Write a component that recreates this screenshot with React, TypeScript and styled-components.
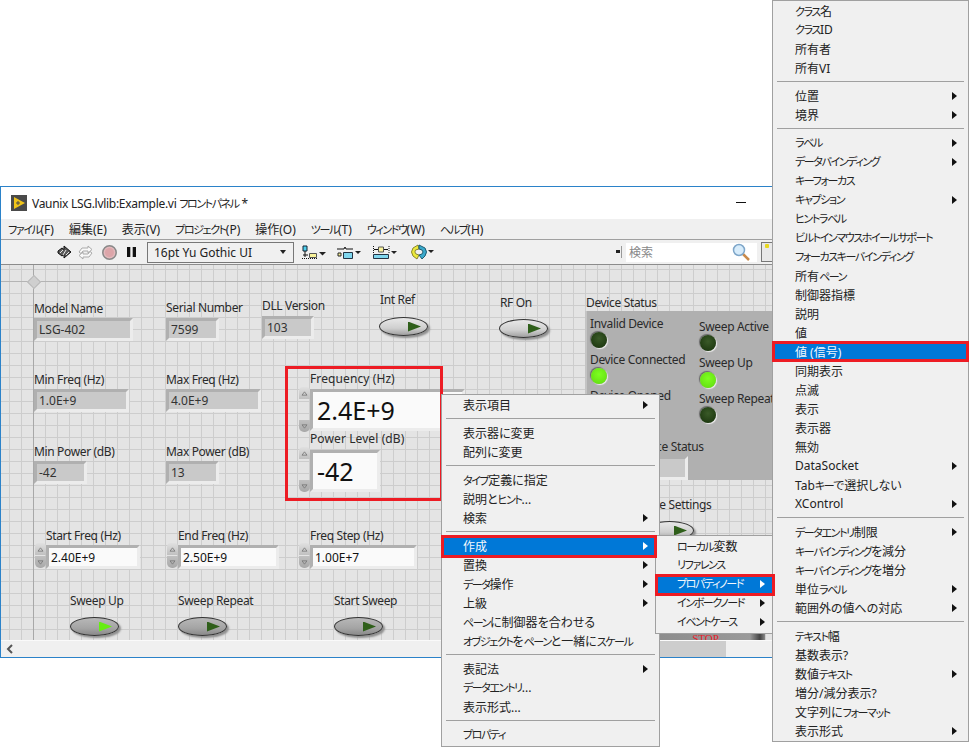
import React from "react";
import styled, { createGlobalStyle, css } from "styled-components";

const GlobalStyle = createGlobalStyle`
  html, body {
    margin: 0;
    background: #fff;
    overflow: hidden;
  }
  body {
    font-family: "Noto Sans", "Noto Sans CJK JP", sans-serif;
    font-size: 12px;
    color: #222;
    font-feature-settings: "palt";
  }
`;

type Pos = { $x: number; $y: number };

// coordinates are those of the screenshot, canvas starts at (1, 265)
const place = css<Pos>`
  position: absolute;
  left: ${(p) => p.$x - 1}px;
  top: ${(p) => p.$y - 265}px;
`;

type Entry = { t?: string; sub?: boolean; on?: boolean };

const sep: Entry = {};
const row = (t: string, sub = false, on = false): Entry => ({ t, sub, on });

const mainMenu: Entry[] = [
  row("表示項目", true),
  sep,
  row("表示器に変更"),
  row("配列に変更"),
  sep,
  row("タイプ定義に指定"),
  row("説明とヒント..."),
  row("検索", true),
  sep,
  row("作成", true, true),
  row("置換", true),
  row("データ操作", true),
  row("上級", true),
  row("ペーンに制御器を合わせる"),
  row("オブジェクトをペーンと一緒にスケール"),
  sep,
  row("表記法", true),
  row("データエントリ..."),
  row("表示形式..."),
  sep,
  row("プロパティ"),
];

const createMenu: Entry[] = [
  row("ローカル変数"),
  row("リファレンス"),
  row("プロパティノード", true, true),
  row("インボークノード", true),
  row("イベントケース", true),
];

const propertyMenu: Entry[] = [
  row("クラス名"),
  row("クラスID"),
  row("所有者"),
  row("所有VI"),
  sep,
  row("位置", true),
  row("境界", true),
  sep,
  row("ラベル", true),
  row("データバインディング", true),
  row("キーフォーカス"),
  row("キャプション", true),
  row("ヒントラベル"),
  row("ビルトインマウスホイールサポート"),
  row("フォーカスキーバインディング"),
  row("所有ペーン"),
  row("制御器指標"),
  row("説明"),
  row("値"),
  row("値 (信号)", false, true),
  row("同期表示"),
  row("点滅"),
  row("表示"),
  row("表示器"),
  row("無効"),
  row("DataSocket", true),
  row("Tabキーで選択しない"),
  row("XControl", true),
  sep,
  row("データエントリ制限", true),
  row("キーバインディングを減分"),
  row("キーバインディングを増分"),
  row("単位ラベル", true),
  row("範囲外の値への対応", true),
  sep,
  row("テキスト幅"),
  row("基数表示?"),
  row("数値テキスト", true),
  row("増分/減分表示?"),
  row("文字列にフォーマット"),
  row("表示形式", true),
];

const menuBarItems = [
  "ファイル(F)",
  "編集(E)",
  "表示(V)",
  "プロジェクト(P)",
  "操作(O)",
  "ツール(T)",
  "ウィンドウ(W)",
  "ヘルプ(H)",
];

const labels: [string, number, number, boolean?][] = [
  ["Model Name", 34, 301],
  ["Serial Number", 166, 300],
  ["DLL Version", 262, 298],
  ["Int Ref", 380, 292],
  ["RF On", 500, 295],
  ["Device Status", 586, 295],
  ["Min Freq (Hz)", 34, 372],
  ["Max Freq (Hz)", 166, 372],
  ["Frequency (Hz)", 310, 371, true],
  ["Power Level (dB)", 310, 431, true],
  ["Min Power (dB)", 34, 444],
  ["Max Power (dB)", 166, 444],
  ["Start Freq (Hz)", 46, 528],
  ["End Freq (Hz)", 178, 528],
  ["Freq Step (Hz)", 310, 528],
  ["Sweep Up", 70, 593],
  ["Sweep Repeat", 178, 593],
  ["Start Sweep", 334, 593],
  ["Save Settings", 641, 497],
];

const clusterLabels: [string, number, number][] = [
  ["Invalid Device", 590, 316],
  ["Device Connected", 590, 352],
  ["Device Opened", 590, 388],
  ["Sweep Active", 699, 319],
  ["Sweep Up", 699, 355],
  ["Sweep Repeat", 699, 391],
  ["Device Status", 633, 439],
];

const readouts: [string, number, number, number][] = [
  ["LSG-402", 34, 318, 99],
  ["7599", 166, 318, 53],
  ["103", 262, 316, 52],
  ["1.0E+9", 34, 389, 95],
  ["4.0E+9", 166, 389, 95],
  ["-42", 34, 461, 53],
  ["13", 166, 461, 53],
];

const smallFields: [string, number, number][] = [
  ["2.40E+9", 46, 94],
  ["2.50E+9", 178, 101],
  ["1.00E+7", 310, 107],
];

const buttons: [number, number, boolean, boolean][] = [
  [379, 317, false, true],
  [499, 319, false, true],
  [645, 521, false, true],
  [70, 617, true, false],
  [178, 617, false, false],
  [334, 617, false, false],
];

const leds: [number, number, boolean][] = [
  [591, 332, false],
  [591, 368, true],
  [700, 335, false],
  [700, 372, true],
  [700, 407, false],
];

// Yu Gothic UI has much narrower katakana than Noto, so runs of them get squeezed
const Jp = ({ t }: { t: string }) => (
  <span>
    {t.split(/([\u30A0-\u30FF]+)/).map((part, i) =>
      i % 2 ? <Kana key={i}>{part}</Kana> : part
    )}
  </span>
);

const Menu = ({ items, textLeft, arrowRight }: { items: Entry[]; textLeft: number; arrowRight: number }) => (
  <>
    {items.map((it, i) =>
      it.t ? (
        <MenuRow key={i} $on={it.on} $left={textLeft} $right={arrowRight}>
          <Jp t={it.t} />
          {it.sub && <MenuArrow $on={it.on} />}
        </MenuRow>
      ) : (
        <MenuSep key={i} />
      )
    )}
  </>
);

const Spinner = ({ x, y, h }: { x: number; y: number; h: number }) => (
  <SpinBox $x={x} $y={y} $h={h}>
    <SpinBtn $up>
      <SpinGlyph viewBox="0 0 8 6">
        <path d="M4 1 7 5H1Z" fill="none" stroke="#777" />
      </SpinGlyph>
    </SpinBtn>
    <SpinBtn>
      <SpinGlyph viewBox="0 0 8 6">
        <path d="M4 5 7 1H1Z" fill="none" stroke="#777" />
      </SpinGlyph>
    </SpinBtn>
  </SpinBox>
);

const App = () => (
  <Page>
    <GlobalStyle />
    <Window>
      <TitleBar>
        <svg width="16" height="16" viewBox="0 0 16 16">
          <rect width="16" height="16" fill="#4a4a4a" />
          <path d="M3 2 14 8 3 14Z" fill="#f0c419" />
          <path d="M5 8h4M7 6v4" stroke="#4a4a4a" strokeWidth="1" />
        </svg>
        <TitleText>
          <Jp t="Vaunix LSG.lvlib:Example.vi フロントパネル *" />
        </TitleText>
        <MinimizeMark />
      </TitleBar>
      <MenuBar>
        {menuBarItems.map((m) => (
          <Jp key={m} t={m} />
        ))}
      </MenuBar>
      <Toolbar>
        <ToolIcon width="16" height="14" viewBox="0 0 16 14">
          <path d="M1 6 5 3l2 1.500V1l7 6-7 6V9.500L5 11 1 8Z" fill="#5a5a5a" stroke="#111" />
          <path d="M3 8l3-3M6 10l3-5M9 10l3-3" stroke="#e4e4e4" />
        </ToolIcon>
        <ToolIcon width="17" height="15" viewBox="0 0 17 15" $ml={4}>
          <path d="M2 7 5 3h6V1l4 3.500L11 8V6H6L4 8.500Z" fill="#f8f8f8" stroke="#aaa" />
          <path d="M15 8l-3 4H6v2L2 10.500 6 7v2h5l2-2.500Z" fill="#f8f8f8" stroke="#aaa" />
        </ToolIcon>
        <ToolIcon width="15" height="15" viewBox="0 0 15 15" $ml={8}>
          <circle cx="7.500" cy="7.500" r="6.700" fill="#e2b9bc" stroke="#888" strokeWidth="1.500" />
          <circle cx="7.500" cy="7.500" r="4.500" fill="#dca5a9" />
        </ToolIcon>
        <ToolIcon width="9" height="10" viewBox="0 0 9 10" $ml={10}>
          <path d="M0 0h3.300v10H0ZM5.700 0H9v10H5.700Z" fill="#111" />
        </ToolIcon>
        <FontSelect>
          <span>16pt Yu Gothic UI</span>
          <Caret />
        </FontSelect>
        <ToolIcon width="24" height="15" viewBox="0 0 24 15" $ml={8}>
          <path d="M1 1h4v5H1Z" fill="#4fd0ee" stroke="#123" />
          <path d="M3 6v6M1 10h5" stroke="#111" />
          <path d="M0 13.500h16" stroke="#111" strokeDasharray="1 1" />
          <path d="M7.500 8.500h7v4h-7Z" fill="#f8f29a" stroke="#555" />
          <path d="M17 7h7l-3.500 3.500Z" fill="#222" />
        </ToolIcon>
        <ToolIcon width="24" height="15" viewBox="0 0 24 15" $ml={11}>
          <path d="M0 4h7l1-2 1 2h7" fill="none" stroke="#111" />
          <path d="M1 8h3v3H1Z" fill="#f8f29a" stroke="#222" />
          <path d="M6.500 7.500h9v6h-9Z" fill="#7fd6ee" stroke="#234" />
          <path d="M18 6h6l-3 3Z" fill="#222" />
        </ToolIcon>
        <ToolIcon width="24" height="15" viewBox="0 0 24 15" $ml={12}>
          <path d="M0.500 1v7M16 1v7" stroke="#111" strokeDasharray="1 1" />
          <path d="M5.500 2h5v5h-5Z" fill="#f8f29a" stroke="#555" />
          <path d="M1 4.500h4M11 4.500h4" stroke="#111" />
          <path d="M0.500 9.500h15v4H0.500Z" fill="#7fd6ee" stroke="#234" />
          <path d="M18 6h6l-3 3Z" fill="#222" />
        </ToolIcon>
        <ToolIcon width="24" height="16" viewBox="0 0 24 16" $ml={13}>
          <path d="M8 1 3 4Q0 8 3 12l4 3 2-4-3-1Q4 8 5.500 6L9 5Z" fill="#ecea3c" stroke="#8a8630" />
          <path d="M9 1v4l3 1q2 2 0 4l-3 1 3 4 3-3q3-4 0-8Z" fill="#3aa9cc" stroke="#1f5c70" />
          <path d="M18 6h6l-3 3Z" fill="#222" />
        </ToolIcon>
        <ToolSpacer />
        <PaneTab />
        <SearchBox>
          <span>検索</span>
          <svg width="18" height="18" viewBox="0 0 18 18">
            <path d="M11 11l6 6" stroke="#c98a4b" strokeWidth="2.500" />
            <circle cx="7" cy="7" r="5.500" fill="#d7ecfb" stroke="#7ea6c9" strokeWidth="1.500" />
          </svg>
        </SearchBox>
        <HelpBox />
      </Toolbar>
      <Canvas>
        <OriginMark />
        <ClusterPanel $x={585} $y={311} />
        {labels.map(([t, x, y, wide]) => (
          <FieldLabel key={t + x} $x={x} $y={y} $wide={wide}>
            {t}
          </FieldLabel>
        ))}
        {clusterLabels.map(([t, x, y]) => (
          <FieldLabel key={t + x} $x={x} $y={y}>
            {t}
          </FieldLabel>
        ))}
        {readouts.map(([t, x, y, w]) => (
          <NumBox key={t + x} $x={x} $y={y} $w={w} $h={23}>
            {t}
          </NumBox>
        ))}
        <NumBox $x={630} $y={456} $w={58} $h={24} />
        {smallFields.map(([t, x, w]) => (
          <React.Fragment key={t}>
            <Spinner x={x - 11} y={543} h={25} />
            <NumBox $x={x} $y={545} $w={w} $h={24} $field>
              {t}
            </NumBox>
          </React.Fragment>
        ))}
        <Spinner x={299} y={387} h={45} />
        <NumBox $x={310} $y={389} $w={155} $h={42} $field $big>
          2.4E+9
        </NumBox>
        <Spinner x={299} y={447} h={45} />
        <NumBox $x={310} $y={450} $w={70} $h={42} $field $big>
          -42
        </NumBox>
        {buttons.map(([x, y, lit, pale]) => (
          <PushButton key={x + "-" + y} $x={x} $y={y} $pale={pale}>
            <ButtonLamp $lit={lit} />
          </PushButton>
        ))}
        {leds.map(([x, y, lit]) => (
          <Led key={x + "-" + y} $x={x} $y={y} $lit={lit} />
        ))}
        <StopButton $x={640} $y={620}>
          STOP
        </StopButton>
        <RedFrame $x={285} $y={366} />
      </Canvas>
      <ScrollBar>
        <ScrollArrow viewBox="0 0 8 10">
          <path d="M6 1 2 5l4 4" fill="none" stroke="#555" strokeWidth="2" />
        </ScrollArrow>
        <ScrollThumb />
      </ScrollBar>
    </Window>
    <PropertyMenu>
      <Menu items={propertyMenu} textLeft={22} arrowRight={11} />
    </PropertyMenu>
    <MainMenu>
      <Menu items={mainMenu} textLeft={21} arrowRight={11} />
    </MainMenu>
    <CreateMenu>
      <Menu items={createMenu} textLeft={21} arrowRight={7} />
    </CreateMenu>
    <MarkFrame $left={441} $top={535} $w={216} $h={23} />
    <MarkFrame $left={655} $top={574} $w={120} $h={22} />
    <MarkFrame $left={772} $top={341} $w={197} $h={21} />
  </Page>
);

export default App;

const Page = styled.div`
  position: relative;
  width: 969px;
  height: 747px;
  padding-top: 186px;
  box-sizing: border-box;
  overflow: hidden;
`;

const Kana = styled.span`
  font-size: 11px;
  letter-spacing: -1.4px;
`;

const Window = styled.div`
  display: flex;
  flex-direction: column;
  width: 800px;
  height: 472px;
  box-sizing: border-box;
  border: 1px solid #2b82c9;
  background: #fff;
`;

const TitleBar = styled.div`
  display: flex;
  align-items: center;
  height: 32px;
  padding-left: 10px;
  flex-shrink: 0;
`;

const TitleText = styled.span`
  margin-left: 5px;
  color: #222;
  letter-spacing: -0.3px;
  white-space: pre;
`;

const MinimizeMark = styled.span`
  position: absolute;
  left: 736px;
  top: 202px;
  width: 10px;
  height: 1px;
  background: #111;
`;

const MenuBar = styled.div`
  display: flex;
  align-items: center;
  gap: 15px;
  height: 20px;
  padding-left: 7px;
  background: #f0f0f0;
  border-bottom: 1px solid #a0a0a0;
  flex-shrink: 0;
`;

const Toolbar = styled.div`
  display: flex;
  align-items: center;
  height: 24px;
  padding-left: 56px;
  background: #f0f0f0;
  border-bottom: 1px solid #8c8c8c;
  flex-shrink: 0;
`;

const ToolIcon = styled.svg<{ $ml?: number }>`
  margin-left: ${(p) => p.$ml ?? 0}px;
  flex-shrink: 0;
`;

const FontSelect = styled.div`
  display: flex;
  align-items: center;
  justify-content: space-between;
  width: 147px;
  height: 21px;
  margin-left: 11px;
  padding: 0 7px 0 6px;
  box-sizing: border-box;
  border: 1px solid #777;
  font-size: 12px;
`;

const Caret = styled.span`
  width: 0;
  height: 0;
  border-left: 3.5px solid transparent;
  border-right: 3.5px solid transparent;
  border-top: 4px solid #222;
`;

const ToolSpacer = styled.div`
  flex: 1;
`;

const PaneTab = styled.div`
  width: 6px;
  height: 12px;
  margin-right: 4px;
  border-right: 1px solid #999;
  box-sizing: border-box;
  background: linear-gradient(#222, #222) 0 4px / 4px 3px no-repeat;
`;

const SearchBox = styled.div`
  display: flex;
  align-items: center;
  justify-content: space-between;
  width: 131px;
  height: 19px;
  padding: 0 7px 0 3px;
  box-sizing: border-box;
  background: #fff;
  color: #888;
`;

const HelpBox = styled.div`
  width: 30px;
  height: 18px;
  margin: 0 6px 0 4px;
  border: 1px solid #777;
  background: radial-gradient(circle at 5px 3px, #e8d820 2px, transparent 2.5px), #e8e8e8;
`;

const Canvas = styled.div`
  position: relative;
  flex: 1;
  overflow: hidden;
  background-color: #e4e4e4;
  background-image: linear-gradient(to right, #cdcdcd 1px, transparent 1px),
    linear-gradient(to bottom, #cdcdcd 1px, transparent 1px);
  background-size: 12px 12px;
  background-position: 8px 4px;

  &::before {
    content: "";
    position: absolute;
    left: 32px;
    top: 0;
    bottom: 0;
    width: 1px;
    background: #a8a8a8;
  }
  &::after {
    content: "";
    position: absolute;
    left: 0;
    right: 0;
    top: 16px;
    height: 1px;
    background: #b4b4b4;
  }
`;

const OriginMark = styled.div`
  position: absolute;
  left: 28px;
  top: 12px;
  width: 8px;
  height: 8px;
  transform: rotate(45deg);
  background: #cfcfcf;
  border: 1px solid #b8b8b8;
  z-index: 1;
`;

const ClusterPanel = styled.div<Pos>`
  ${place}
  width: 220px;
  height: 169px;
  background: #b0b0b0;
  border-left: 2px solid #c4c4c4;
  box-sizing: border-box;
`;

const FieldLabel = styled.div<Pos & { $wide?: boolean }>`
  ${place}
  line-height: 16px;
  white-space: nowrap;
  color: #2a2a2a;
  letter-spacing: ${(p) => (p.$wide ? 0.1 : -0.35)}px;
`;

const NumBox = styled.div<Pos & { $w: number; $h: number; $field?: boolean; $big?: boolean }>`
  ${place}
  display: flex;
  align-items: center;
  width: ${(p) => p.$w}px;
  height: ${(p) => p.$h}px;
  box-sizing: border-box;
  padding-left: ${(p) => (p.$big ? 4 : 2)}px;
  border: 3px solid;
  border-color: #b0b0b0 #ececec #ececec #b0b0b0;
  background: ${(p) => (p.$field ? "#fafafa" : "#c9c9c9")};
  font-size: ${(p) => (p.$big ? 25 : 12)}px;
  color: ${(p) => (p.$field ? "#111" : "#333")};
  white-space: nowrap;
`;

const SpinBox = styled.div<Pos & { $h: number }>`
  ${place}
  display: flex;
  flex-direction: column;
  justify-content: space-between;
  width: 11px;
  height: ${(p) => p.$h}px;
`;

const SpinBtn = styled.div<{ $up?: boolean }>`
  display: flex;
  align-items: center;
  justify-content: center;
  height: 12px;
  background: linear-gradient(${(p) => (p.$up ? "#e0e0e0, #c0c0c0" : "#c0c0c0, #a8a8a8")});
  border-radius: ${(p) => (p.$up ? "4px 4px 0 0" : "0 0 5px 5px")};
`;

const SpinGlyph = styled.svg`
  width: 7px;
  height: 5px;
`;

const PushButton = styled.div<Pos & { $pale?: boolean }>`
  ${place}
  display: flex;
  align-items: center;
  justify-content: flex-end;
  width: 49px;
  height: 19px;
  padding-right: 6px;
  box-sizing: border-box;
  border: 1px solid #333;
  border-radius: 50%;
  background: ${(p) =>
    p.$pale
      ? "linear-gradient(#e8e8e8, #cfcfcf 60%, #a0a0a0)"
      : "linear-gradient(#b8b8b8, #a4a4a4 60%, #8a8a8a)"};
  box-shadow: 2px 2px 2px #8f8f8f;
`;

const ButtonLamp = styled.div<{ $lit?: boolean }>`
  width: 13px;
  height: 10px;
  clip-path: polygon(0 0, 100% 50%, 0 100%);
  background: ${(p) => (p.$lit ? "#66ee11" : "#2f5f1a")};
`;

const Led = styled.div<Pos & { $lit?: boolean }>`
  ${place}
  width: 16px;
  height: 16px;
  border-radius: 50%;
  background: ${(p) =>
    p.$lit
      ? "radial-gradient(circle at 50% 40%, #7dff20, #5fd80f)"
      : "radial-gradient(circle at 50% 40%, #3a5a28, #16300a)"};
  box-shadow: 1px 1px 1px #eee, -1px -1px 1px #666;
`;

const StopButton = styled.div<Pos>`
  ${place}
  width: 125px;
  height: 40px;
  padding-top: 12px;
  box-sizing: border-box;
  text-align: center;
  padding-left: 6px;
  background: linear-gradient(to right, #8a8a8a 0, #9a9a9a 88%, #444 96%, #888);
  color: #e8202a;
  font-family: "Liberation Serif", serif;
  font-size: 11px;
`;

const RedFrame = styled.div<Pos>`
  ${place}
  width: 158px;
  height: 135px;
  box-sizing: border-box;
  border: 3px solid #ed1c24;
  z-index: 2;
`;

const ScrollBar = styled.div`
  display: flex;
  align-items: center;
  height: 16px;
  background: #f0f0f0;
  border-top: 1px solid #fafafa;
  flex-shrink: 0;
`;

const ScrollArrow = styled.svg`
  width: 8px;
  height: 10px;
  margin-left: 5px;
`;

const ScrollThumb = styled.div`
  width: 280px;
  height: 100%;
  margin-left: 432px;
  background: #cdcdcd;
`;

const menuPanel = css`
  position: absolute;
  box-sizing: border-box;
  background: #f0f0f0;
  border: 1px solid #a0a0a0;
`;

const PropertyMenu = styled.div`
  ${menuPanel}
  left: 772px;
  top: 0;
  width: 197px;
  height: 742px;
  z-index: 1;
`;

const MainMenu = styled.div`
  ${menuPanel}
  left: 441px;
  top: 394px;
  width: 219px;
  height: 353px;
  z-index: 2;
`;

const CreateMenu = styled.div`
  ${menuPanel}
  left: 655px;
  top: 535px;
  width: 118px;
  height: 99px;
  z-index: 3;
`;

const MarkFrame = styled.div<{ $left: number; $top: number; $w: number; $h: number }>`
  position: absolute;
  left: ${(p) => p.$left}px;
  top: ${(p) => p.$top}px;
  width: ${(p) => p.$w}px;
  height: ${(p) => p.$h}px;
  box-sizing: border-box;
  border: 3px solid #ed1c24;
  z-index: 4;
`;

const MenuRow = styled.div<{ $on?: boolean; $left: number; $right: number }>`
  display: flex;
  align-items: center;
  justify-content: space-between;
  height: 19px;
  padding: 0 ${(p) => p.$right}px 0 ${(p) => p.$left}px;
  white-space: nowrap;
  color: ${(p) => (p.$on ? "#f4f8fc" : "#222")};
  background: ${(p) => (p.$on ? "#0078d7" : "transparent")};
`;

const MenuArrow = styled.span<{ $on?: boolean }>`
  width: 0;
  height: 0;
  border-top: 4.5px solid transparent;
  border-bottom: 4.5px solid transparent;
  border-left: 5px solid ${(p) => (p.$on ? "#fff" : "#111")};
`;

const MenuSep = styled.div`
  height: 9px;
  margin: 0 4px;
  background: linear-gradient(#a0a0a0, #a0a0a0) 0 4px / 100% 1px no-repeat;
`;
